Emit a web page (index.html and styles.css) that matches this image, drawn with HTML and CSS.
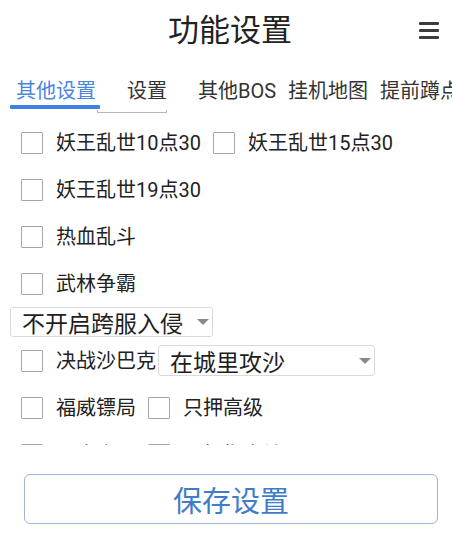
FILE: index.html
```html
<!DOCTYPE html>
<html>
  <head>
    <title>功能设置</title>
    <link rel="stylesheet" href="styles.css">
  </head>
  <body>
    <div class="header">
      <div></div>
      <p class="title">功能设置</p>
      <div class="menu">
        <span></span>
        <span></span>
        <span></span>
      </div>
    </div>

    <div class="tabs">
      <div class="tab active">其他设置</div>
      <div class="tab second">设置</div>
      <div class="tab third">其他BOS</div>
      <div class="tab">挂机地图</div>
      <div class="tab">提前蹲点</div>
    </div>

    <div class="list">
      <div class="row">
        <label class="item"><span class="check"></span>妖王乱世10点30</label>
        <label class="item"><span class="check"></span>妖王乱世15点30</label>
      </div>
      <div class="row">
        <label class="item"><span class="check"></span>妖王乱世19点30</label>
      </div>
      <div class="row">
        <label class="item"><span class="check"></span>热血乱斗</label>
      </div>
      <div class="row">
        <label class="item"><span class="check"></span>武林争霸</label>
      </div>
      <div class="select-row">
        <div class="select cross">
          <span>不开启跨服入侵</span>
          <svg width="12" height="6" viewBox="0 0 12 6"><path d="M0 0 H12 L6 6 Z" fill="#8a8a8a"/></svg>
        </div>
      </div>
      <div class="row">
        <label class="item tight"><span class="check"></span>决战沙巴克</label>
        <div class="select siege">
          <span>在城里攻沙</span>
          <svg width="12" height="6" viewBox="0 0 12 6"><path d="M0 0 H12 L6 6 Z" fill="#8a8a8a"/></svg>
        </div>
      </div>
      <div class="row">
        <label class="item"><span class="check"></span>福威镖局</label>
        <label class="item"><span class="check"></span>只押高级</label>
      </div>
      <div class="row">
        <label class="item"><span class="check"></span>屠魔大厅</label>
        <label class="item"><span class="check"></span>只打指定地图</label>
      </div>
    </div>

    <div class="save-box">
      <button class="save">保存设置</button>
    </div>
  </body>
</html>
```

FILE: styles.css
```css
body {
  margin: 0;
  background: #fff;
  color: #222;
  font-family: Roboto, "Noto Sans CJK SC", sans-serif;
  overflow: hidden;
}

.header {
  height: 66px;
  display: grid;
  grid-template-columns: 1fr auto 1fr;
  align-items: center;
}
.title {
  margin: 0 0 4px 0;
  font-size: 31px;
  line-height: 40px;
  padding-left: 8px;
}
.menu {
  justify-self: end;
  margin-right: 13px;
  margin-top: -6px;
  width: 20px;
  display: flex;
  flex-direction: column;
  gap: 4px;
}
.menu span {
  height: 3px;
  background: #3c3c3c;
  border-radius: 1px;
}

.tabs {
  display: flex;
  padding-left: 10px;
  white-space: nowrap;
  overflow: hidden;
  height: 53px;
}
.tab {
  font-size: 20px;
  line-height: 50px;
  height: 50px;
  margin-left: 12px;
  color: #333;
  flex-shrink: 0;
  box-sizing: border-box;
}
.tab.active {
  margin-left: 0;
  width: 90px;
  padding-left: 6px;
  color: #4a86e0;
  position: relative;
}
.tab.active::after {
  content: "";
  position: absolute;
  left: 0;
  right: 0;
  top: 39px;
  height: 4px;
  border-radius: 1px;
  background: #3e7fe8;
}
.tab.second {
  margin-left: -3px;
  width: 70px;
  padding-left: 30px;
  position: relative;
}
.tab.second::after {
  content: "";
  position: absolute;
  left: 0;
  right: 0;
  top: 44px;
  height: 2px;
  border: 1px solid #b8b8b8;
  border-top: none;
}
.tab.third {
  margin-left: 31px;
}

.list {
  height: 326px;
  overflow: hidden;
}
.row {
  height: 47px;
  display: flex;
  align-items: center;
  padding-left: 21px;
}
.item {
  display: flex;
  align-items: center;
  font-size: 20px;
  line-height: 24px;
  margin-right: 12px;
}
.item.tight {
  margin-right: 2px;
}
.check {
  width: 20px;
  height: 20px;
  border: 1.5px solid #a6a6a6;
  border-radius: 1px;
  margin-right: 13px;
}

.select-row {
  height: 30px;
  display: flex;
  padding-left: 10px;
}
.select {
  box-sizing: border-box;
  display: flex;
  align-items: center;
  justify-content: space-between;
  border: 1px solid #dadada;
  border-radius: 3px;
  font-size: 23px;
  padding: 0 3px 0 11px;
  color: #1e1e1e;
}
.select.cross {
  width: 203px;
  height: 30px;
}
.select.siege {
  width: 217px;
  height: 31px;
}

.save-box {
  padding: 29px 14px 0 24px;
}
.save {
  width: 100%;
  height: 50px;
  background: #fff;
  border: 1px solid #9fb6d6;
  border-radius: 6px;
  font-family: Roboto, "Noto Sans CJK SC", sans-serif;
  font-size: 29px;
  color: #3f7cc9;
  padding: 0;
}
```
